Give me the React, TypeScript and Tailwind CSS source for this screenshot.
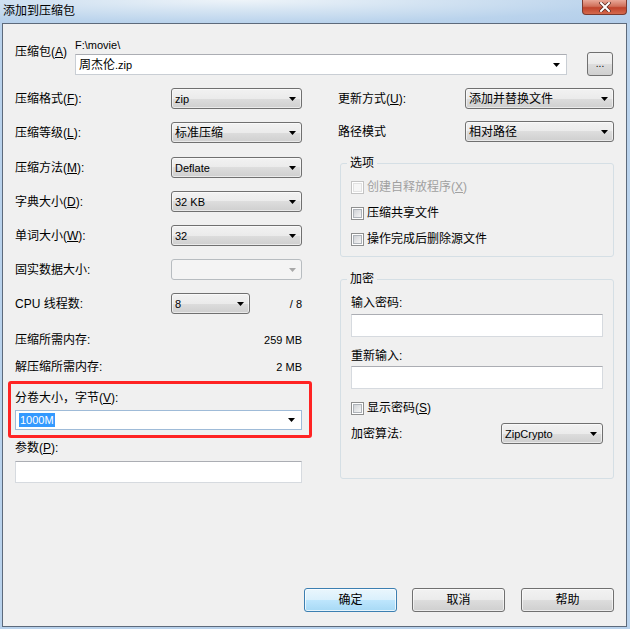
import React from 'react'

function Arrow({ disabled }: { disabled?: boolean }) {
  return (
    <svg width="7" height="4" viewBox="0 0 7 4" className="shrink-0">
      <path d="M0 0h7L3.5 4z" fill={disabled ? '#a8a8a8' : '#000'} />
    </svg>
  )
}

function Key({ k }: { k: string }) {
  return (
    <>
      (<span className="underline underline-offset-1">{k}</span>)
    </>
  )
}

function Combo({ value, className = '', latin }: { value: string; className?: string; latin?: boolean }) {
  return (
    <div
      className={`h-[21px] flex items-center justify-between rounded-[3px] border border-[#707070] bg-[linear-gradient(to_bottom,#f2f2f2_0%,#ebebeb_50%,#dddddd_50%,#cfcfcf_100%)] shadow-[inset_0_0_0_1px_rgba(255,255,255,0.55)] pl-[3px] pr-[5px] ${className}`}
    >
      <span className={latin ? 'text-[11px]' : ''}>{value}</span>
      <Arrow />
    </div>
  )
}

function Checkbox({ label, disabled }: { label: React.ReactNode; disabled?: boolean }) {
  return (
    <div className={`flex items-center h-[14px] ${disabled ? 'text-[#a0a0a0]' : ''}`}>
      <span
        className={`w-[13px] h-[13px] border bg-white p-[1px] mr-[3px] ${disabled ? 'border-[#c4c4c4]' : 'border-[#8e8f8f]'}`}
      >
        <span
          className={`block w-full h-full border ${
            disabled
              ? 'border-[#e2e2e2] bg-[#f6f6f6]'
              : 'border-[#aeb3b9] bg-[linear-gradient(135deg,#cfd2d6,#f5f5f5)]'
          }`}
        />
      </span>
      <span>{label}</span>
    </div>
  )
}

function Row({ label, value, latin, top = '' }: { label: React.ReactNode; value: string; latin?: boolean; top?: string }) {
  return (
    <div className={`flex items-center h-[21px] ${top}`}>
      <div className="w-[156px]">{label}</div>
      <Combo value={value} latin={latin} className="w-[131px]" />
    </div>
  )
}

function Button({ children, primary }: { children: React.ReactNode; primary?: boolean }) {
  return (
    <div
      className={`w-[93px] h-[24px] flex items-center justify-center rounded-[3px] border ${
        primary
          ? 'border-[#3c7fb1] bg-[linear-gradient(to_bottom,#eaf6fd_0%,#d9f0fc_50%,#bee6fd_50%,#a7d9f5_100%)] shadow-[inset_0_0_0_1px_rgba(255,255,255,0.7)]'
          : 'border-[#707070] bg-[linear-gradient(to_bottom,#f2f2f2_0%,#ebebeb_50%,#dddddd_50%,#cfcfcf_100%)] shadow-[inset_0_0_0_1px_rgba(255,255,255,0.6)]'
      }`}
    >
      {children}
    </div>
  )
}

export default function App() {
  return (
    <div className="w-[630px] h-[629px] overflow-hidden flex flex-col bg-[#b9d2ec] text-[12px] leading-[14px] text-black font-['Liberation_Sans','Noto_Sans_CJK_SC',sans-serif]">
      {/* title bar */}
      <div className="h-[23px] shrink-0 flex justify-between bg-[radial-gradient(ellipse_at_38%_0%,#eef4f9_0%,#d3e3f2_35%,#bad3ec_70%,#b3cdea_100%)]">
        <div className="pl-[3px] pt-[4px] text-[12px] leading-[15px]">添加到压缩包</div>
        <div className="mr-[3px] w-[45px] h-[15px] rounded-b-[4px] border border-t-0 border-[#7b3a2f] bg-[linear-gradient(to_bottom,#e9a898_0%,#d0705a_45%,#c0432b_55%,#d46a4e_100%)] flex items-center justify-center">
          <svg width="12" height="10" viewBox="0 0 12 10">
            <path d="M2 1l8 8M10 1l-8 8" stroke="#5a2a22" strokeWidth="3.4" strokeLinecap="square" />
            <path d="M2 1l8 8M10 1l-8 8" stroke="#fff" strokeWidth="2" strokeLinecap="square" />
          </svg>
        </div>
      </div>

      {/* client area */}
      <div className="ml-[2px] w-[625px] h-[604px] shrink-0 border border-[#5d6a7b] bg-[#f0f0f0] flex flex-col pl-[12px] pr-[12px]">
        {/* archive row */}
        <div className="mt-[14px] flex items-start">
          <div className="w-[60px] pt-[7px]">
            压缩包<Key k="A" />
          </div>
          <div className="w-[492px] flex flex-col">
            <div className="h-[14px] text-[11px]">F:\movie\</div>
            <div className="mt-[2px] h-[21px] flex items-center justify-between bg-white border border-[#c9ced4] border-t-[#abadb3] pl-[3px] pr-[6px]">
              <span>
                周杰伦<span className="text-[11px]">.zip</span>
              </span>
              <Arrow />
            </div>
          </div>
          <div className="ml-[20px] mt-[14px] w-[26px] h-[24px] flex items-end justify-center pb-[6px] rounded-[3px] border border-[#707070] bg-[linear-gradient(to_bottom,#f2f2f2_0%,#ebebeb_50%,#dddddd_50%,#cfcfcf_100%)] text-[10px] leading-[10px]">
              ...
          </div>
        </div>

        {/* two columns */}
        <div className="mt-[12px] flex gap-[36px]">
          {/* left */}
          <div className="w-[287px] flex flex-col">
            <Row label={<>压缩格式<Key k="F" />:</>} value="zip" latin />
            <Row top="mt-[13px]" label={<>压缩等级<Key k="L" />:</>} value="标准压缩" />
            <Row top="mt-[14px]" label={<>压缩方法<Key k="M" />:</>} value="Deflate" latin />
            <Row top="mt-[13px]" label={<>字典大小<Key k="D" />:</>} value="32 KB" latin />
            <Row top="mt-[13px]" label={<>单词大小<Key k="W" />:</>} value="32" latin />
            <div className="mt-[13px] flex items-center h-[21px]">
              <div className="w-[156px]">固实数据大小:</div>
              <div className="w-[131px] h-[21px] flex items-center justify-end pr-[5px] rounded-[3px] border border-[#b7bcc0] bg-[#f4f4f4]">
                <Arrow disabled />
              </div>
            </div>
            <div className="mt-[13px] flex items-center h-[21px]">
              <div className="w-[156px]">CPU 线程数:</div>
              <Combo value="8" latin className="w-[79px]" />
              <div className="ml-auto text-[11px]">/ 8</div>
            </div>
            <div className="mt-[19px] flex justify-between h-[14px]">
              <span>压缩所需内存:</span>
              <span className="text-[11px]">259 MB</span>
            </div>
            <div className="mt-[13px] flex justify-between h-[14px]">
              <span>解压缩所需内存:</span>
              <span className="text-[11px]">2 MB</span>
            </div>
            <div className="mt-[7px] -ml-[7px] w-[304px] h-[57px] border-[3px] border-[#ff2323] rounded-[3px] flex flex-col pl-[4px]">
              <div className="mt-[7px] h-[14px]">
                分卷大小，字节<Key k="V" />:
              </div>
              <div className="mt-[5px] w-[287px] h-[20px] flex items-center justify-between bg-white border border-[#9fbbd8] pl-[3px] pr-[6px]">
                <span className="bg-[#3399ff] text-white text-[11px] leading-[14px] px-px">1000M</span>
                <Arrow />
              </div>
            </div>
            <div className="mt-[3px] h-[14px]">
              参数<Key k="P" />:
            </div>
            <div className="mt-[6px] w-[287px] h-[22px] bg-white border border-[#d6dadf] border-t-[#abadb3]" />
          </div>

          {/* right */}
          <div className="w-[276px] flex flex-col">
            <div className="flex items-center h-[21px]">
              <div className="w-[127px]">
                更新方式<Key k="U" />:
              </div>
              <Combo value="添加并替换文件" className="w-[149px]" />
            </div>
            <div className="mt-[12px] flex items-center h-[21px]">
              <div className="w-[127px]">路径模式</div>
              <Combo value="相对路径" className="w-[149px]" />
            </div>

            <fieldset className="mt-[14px] ml-[2px] w-[274px] border border-[#d5dfe5] rounded-[3px] pl-[10px] pb-[10px]">
              <legend className="ml-[-4px] px-[3px] h-[14px]">选项</legend>
              <div className="mt-[10px] flex flex-col gap-[12px]">
                <Checkbox disabled label={<>创建自释放程序<Key k="X" /></>} />
                <Checkbox label="压缩共享文件" />
                <Checkbox label="操作完成后删除源文件" />
              </div>
            </fieldset>

            <fieldset className="mt-[15px] ml-[2px] w-[274px] border border-[#d5dfe5] rounded-[3px] pl-[10px] pr-[10px] pb-[34px]">
              <legend className="ml-[-4px] px-[3px] h-[14px]">加密</legend>
              <div className="mt-[10px] h-[14px]">输入密码:</div>
              <div className="mt-[4px] w-[252px] h-[23px] bg-white border border-[#d6dadf] border-t-[#abadb3]" />
              <div className="mt-[12px] h-[14px]">重新输入:</div>
              <div className="mt-[3px] w-[252px] h-[23px] bg-white border border-[#d6dadf] border-t-[#abadb3]" />
              <div className="mt-[12px]">
                <Checkbox label={<>显示密码<Key k="S" /></>} />
              </div>
              <div className="mt-[8px] flex items-center h-[21px]">
                <div className="w-[150px]">加密算法:</div>
                <Combo value="ZipCrypto" latin className="w-[102px]" />
              </div>
            </fieldset>
          </div>
        </div>

        {/* buttons */}
        <div className="mt-auto pb-[14px] flex justify-end">
          <Button primary>确定</Button>
          <div className="ml-[15px]">
            <Button>取消</Button>
          </div>
          <div className="ml-[16px]">
            <Button>帮助</Button>
          </div>
        </div>
      </div>
    </div>
  )
}
